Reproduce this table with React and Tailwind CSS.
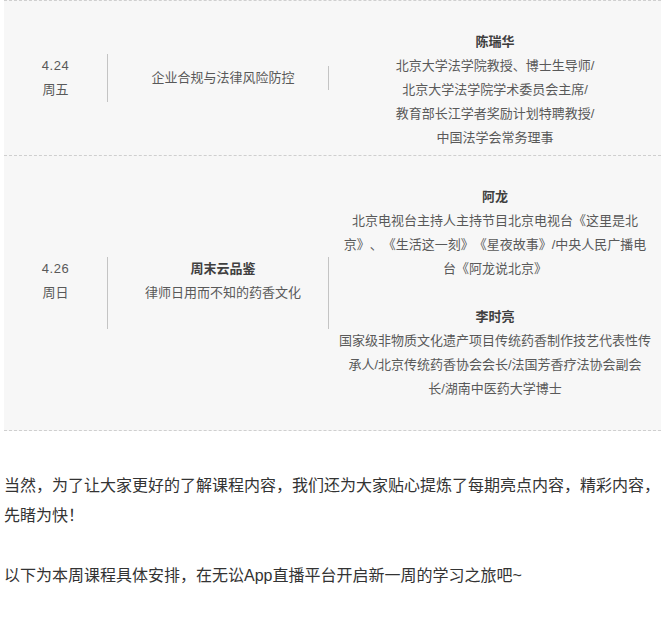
const Line = ({ children, bold }) => (
  <p className={`whitespace-nowrap ${bold ? 'font-bold text-[#3f3f3f]' : ''}`}>{children}</p>
);

const Blank = () => <p className="h-[24px]" />;

export default function App() {
  return (
    <div className="min-h-screen bg-white font-['Liberation_Sans','Noto_Sans_CJK_SC',sans-serif] [text-spacing-trim:space-all]">
      <div className="ml-[4px] w-[657px]">
        {/* schedule table */}
        <div className="bg-[#f7f7f7] text-[13px] leading-[24px] text-[#595959]">
          {/* 4.24 */}
          <div className="flex items-center border-t border-dashed border-[#cfcfcf] py-[5px]">
            <div className="w-[104px] shrink-0 border-r border-[#c4c4c4] text-center">
              <p className="tracking-[0.5px]">4.24</p>
              <p>周五</p>
            </div>
            <div className="w-[221px] shrink-0 border-r border-[#c4c4c4] pl-[10px] text-center">
              <p>企业合规与法律风险防控</p>
            </div>
            <div className="flex-1 text-center">
              <Blank />
              <Line bold>陈瑞华</Line>
              <Line>北京大学法学院教授、博士生导师/</Line>
              <Line>北京大学法学院学术委员会主席/</Line>
              <Line>教育部长江学者奖励计划特聘教授/</Line>
              <Line>中国法学会常务理事</Line>
            </div>
          </div>

          {/* 4.26 */}
          <div className="flex items-center border-y border-dashed border-[#cfcfcf] py-[5px]">
            <div className="w-[104px] shrink-0 border-r border-[#c4c4c4] text-center">
              <p className="tracking-[0.5px]">4.26</p>
              <p>周日</p>
              <Blank />
            </div>
            <div className="w-[221px] shrink-0 border-r border-[#c4c4c4] pl-[10px] text-center">
              <p className="font-bold text-[#3f3f3f]">周末云品鉴</p>
              <p>律师日用而不知的药香文化</p>
              <Blank />
            </div>
            <div className="flex-1 text-center">
              <Blank />
              <Line bold>阿龙</Line>
              <Line>北京电视台主持人主持节目北京电视台《这里是北</Line>
              <Line>京》、《生活这一刻》《星夜故事》/中央人民广播电</Line>
              <Line>台《阿龙说北京》</Line>
              <Blank />
              <Line bold>李时亮</Line>
              <Line>国家级非物质文化遗产项目传统药香制作技艺代表性传</Line>
              <Line>承人/北京传统药香协会会长/法国芳香疗法协会副会</Line>
              <Line>长/湖南中医药大学博士</Line>
              <Blank />
            </div>
          </div>
        </div>

        {/* intro text */}
        <div className="mt-[40px] text-[16px] leading-[30px] text-[#333333]">
          <p className="whitespace-nowrap">当然，为了让大家更好的了解课程内容，我们还为大家贴心提炼了每期亮点内容，精彩内容，</p>
          <p>先睹为快！</p>
          <p className="h-[30px]" />
          <p>以下为本周课程具体安排，在无讼App直播平台开启新一周的学习之旅吧~</p>
        </div>
      </div>
    </div>
  );
}
